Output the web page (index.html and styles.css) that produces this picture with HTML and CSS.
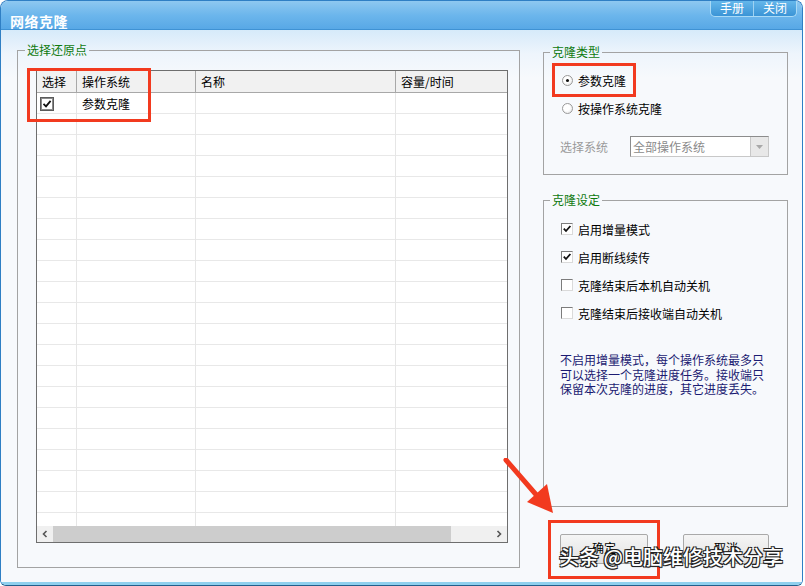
FILE: index.html
```html
<!DOCTYPE html>
<html lang="zh-CN">
  <head>
    <meta charset="UTF-8" />
    <title>网络克隆</title>
    <link rel="stylesheet" href="styles.css">
  </head>
  <body>
    <div class="window">
      <!-- Title bar -->
      <div class="titlebar">
        <span class="title">网络克隆</span>
        <div class="sys-buttons">
          <span class="sys-btn">手册</span><span class="sys-btn">关闭</span>
        </div>
      </div>

      <div class="main">
        <!-- Left: restore points -->
        <fieldset class="group group-points">
          <legend>选择还原点</legend>
          <div class="points-body">
            <div class="list">
              <div class="list-head">
                <div class="col col-check">选择</div>
                <div class="col col-os">操作系统</div>
                <div class="col col-name">名称</div>
                <div class="col col-size">容量/时间</div>
              </div>
              <div class="list-rows">
                <div class="row">
                  <div class="col col-check">
                    <span class="list-check">
                      <svg width="10" height="10" viewBox="0 0 10 10"><path d="M1.5 4.8 L4 7.3 L8.6 1.8" fill="none" stroke="#111" stroke-width="1.8"/></svg>
                    </span>
                  </div>
                  <div class="col col-os">参数克隆</div>
                  <div class="col col-name"></div>
                  <div class="col col-size"></div>
                </div>
              </div>
              <div class="hscroll">
                <span class="scroll-arrow">
                  <svg width="8" height="8" viewBox="0 0 8 8"><path d="M5.5 1 L2.5 4 L5.5 7" fill="none" stroke="#555" stroke-width="1.6"/></svg>
                </span>
                <span class="scroll-thumb"></span>
                <span class="scroll-track"></span>
                <span class="scroll-arrow">
                  <svg width="8" height="8" viewBox="0 0 8 8"><path d="M2.5 1 L5.5 4 L2.5 7" fill="none" stroke="#555" stroke-width="1.6"/></svg>
                </span>
              </div>
            </div>
          </div>
        </fieldset>

        <!-- Right column -->
        <div class="side">
          <fieldset class="group group-type">
            <legend>克隆类型</legend>
            <div class="type-body">
              <div class="radio-row">
                <span class="radio checked"></span>参数克隆
              </div>
              <div class="radio-row">
                <span class="radio"></span>按操作系统克隆
              </div>
              <div class="select-row">
                <span class="select-label">选择系统</span>
                <div class="select">
                  <span class="select-text">全部操作系统</span>
                  <span class="select-btn">
                    <svg width="7" height="4" viewBox="0 0 7 4"><path d="M0 0 H7 L3.5 4 Z" fill="#a8a8a8"/></svg>
                  </span>
                </div>
              </div>
            </div>
          </fieldset>

          <fieldset class="group group-settings">
            <legend>克隆设定</legend>
            <div class="settings-body">
              <div class="check-row">
                <span class="check">
                  <svg width="10" height="10" viewBox="0 0 10 10"><path d="M1.8 4.6 L4 7 L8.4 2" fill="none" stroke="#111" stroke-width="1.8"/></svg>
                </span>启用增量模式
              </div>
              <div class="check-row">
                <span class="check">
                  <svg width="10" height="10" viewBox="0 0 10 10"><path d="M1.8 4.6 L4 7 L8.4 2" fill="none" stroke="#111" stroke-width="1.8"/></svg>
                </span>启用断线续传
              </div>
              <div class="check-row">
                <span class="check"></span>克隆结束后本机自动关机
              </div>
              <div class="check-row">
                <span class="check"></span>克隆结束后接收端自动关机
              </div>
              <p class="note">
                不启用增量模式，每个操作系统最多只<br />可以选择一个克隆进度任务。接收端只<br />保留本次克隆的进度，其它进度丢失。
              </p>
            </div>
          </fieldset>

          <div class="actions">
            <button class="btn btn-ok">确定</button>
            <button class="btn btn-cancel">取消</button>
          </div>
        </div>
      </div>

      <!-- Annotations drawn over the screenshot -->
      <div class="mark mark-list"></div>
      <div class="mark mark-radio"></div>
      <div class="mark mark-ok"></div>
      <svg class="arrow" width="60" height="64" viewBox="0 0 60 64">
        <line x1="3" y1="2" x2="36" y2="40" stroke="#f23a1f" stroke-width="5" stroke-linecap="round"/>
        <polygon points="50,55 24,44 44,26" fill="#f23a1f"/>
      </svg>
      <div class="watermark">头条 @电脑维修技术分享</div>
    </div>
  </body>
</html>
```

FILE: styles.css
```css
body {
  margin: 0;
  background: #ffffff;
  font-family: "Noto Sans CJK SC", "Noto Sans", sans-serif;
  font-size: 12px;
  color: #000;
}

.window {
  position: relative;
  width: 803px;
  height: 586px;
  display: flex;
  flex-direction: column;
  border-radius: 8px 8px 6px 6px;
  overflow: hidden;
  box-sizing: border-box;
  border: 1px solid #2f7fc4;
  border-bottom: 1px solid #215f8c;
  background: #f7f9fc;
}

/* ---- title bar ---- */
.titlebar {
  position: relative;
  height: 28px;
  flex-shrink: 0;
  background: linear-gradient(#8ec8f0, #6cb6ec 50%, #58a8e6);
  border-bottom: 1px solid #3f92d4;
}

.title {
  display: block;
  padding: 12px 0 0 9px;
  line-height: 16px;
  font-size: 14px;
  font-weight: bold;
  color: #ffffff;
  letter-spacing: 0.5px;
}

.sys-buttons {
  position: absolute;
  top: -1px;
  right: 5px;
  display: flex;
  height: 16px;
  border: 1px solid #a9daf6;
  border-top: none;
  border-radius: 0 0 5px 5px;
  overflow: hidden;
  background: linear-gradient(#67b9ec, #3b94d6);
}

.sys-btn {
  width: 42px;
  line-height: 16px;
  text-align: center;
  color: #ffffff;
  font-size: 12px;
}

.sys-btn + .sys-btn {
  border-left: 1px solid #9fd2f2;
}

/* ---- main area ---- */
.main {
  flex: 1;
  display: flex;
  gap: 23px;
  padding: 13px 0 0 16px;
  background: linear-gradient(#d6eafa 0, #eef5fc 24px, #f7f9fc 48px);
  border-bottom: 3px solid #8fd0ee;
}

.group {
  margin: 0;
  padding: 0;
  min-width: 0;
  border: 1px solid #a3a3a3;
  box-sizing: border-box;
}

.group legend {
  padding: 0 2px;
  line-height: 14px;
  color: #0f7a0f;
  font-size: 12px;
}

.group-points {
  width: 503px;
  align-self: flex-start;
}

.group-points legend {
  margin-left: 7px;
}

.points-body {
  padding: 13px 11px 24px 18px;
}

/* ---- list view ---- */
.list {
  height: 473px;
  box-sizing: border-box;
  border: 1px solid #6e6e6e;
  background: #ffffff;
  display: flex;
  flex-direction: column;
}

.list-head {
  display: flex;
  height: 21px;
  flex-shrink: 0;
  background: #f1f1f1;
  border-bottom: 1px solid #a8a8a8;
}

.list-head .col {
  line-height: 21px;
  border-right: 1px solid #a8a8a8;
}

.col {
  box-sizing: border-box;
  padding-left: 5px;
}

.col-check { width: 40px; }
.col-os { width: 119px; }
.col-name { width: 200px; }
.col-size { flex: 1; border-right: none !important; }

.list-rows {
  flex: 1;
  overflow: hidden;
  background-image:
    linear-gradient(to right, transparent 39px, #e6e6e6 39px, #e6e6e6 40px, transparent 40px,
      transparent 158px, #e6e6e6 158px, #e6e6e6 159px, transparent 159px,
      transparent 358px, #e6e6e6 358px, #e6e6e6 359px, transparent 359px),
    repeating-linear-gradient(to bottom, transparent 0, transparent 20px, #e8e8e8 20px, #e8e8e8 21px);
}

.row {
  display: flex;
  height: 21px;
  align-items: center;
}

.row .col-check {
  padding-left: 3px;
}

.list-check {
  display: flex;
  align-items: center;
  justify-content: center;
  width: 12px;
  height: 12px;
  border: 1px solid #5a5a5a;
  box-shadow: inset 0 0 0 1px #8a8a8a;
  background: #ffffff;
}

.hscroll {
  display: flex;
  height: 16px;
  flex-shrink: 0;
  background: #f0f0f0;
}

.scroll-arrow {
  width: 16px;
  display: flex;
  align-items: center;
  justify-content: center;
}

.scroll-thumb {
  width: 398px;
  background: #cdcdcd;
}

.scroll-track {
  flex: 1;
}

/* ---- right column ---- */
.side {
  width: 245px;
  margin-top: 2px;
  display: flex;
  flex-direction: column;
}

.group-type legend,
.group-settings legend {
  margin-left: 6px;
}

.type-body {
  padding: 11px 0 17px 16px;
}

.radio-row {
  display: flex;
  align-items: center;
  gap: 5px;
  height: 20px;
  padding-left: 2px;
}

.radio-row + .radio-row {
  margin-top: 8px;
}

.radio {
  width: 11px;
  height: 11px;
  box-sizing: border-box;
  border-radius: 50%;
  border: 1px solid #9a9a9a;
  background: radial-gradient(circle at 40% 40%, #ffffff 40%, #dedede);
  position: relative;
}

.radio.checked::after {
  content: "";
  position: absolute;
  left: 3px;
  top: 3px;
  width: 3px;
  height: 3px;
  border-radius: 50%;
  background: #111;
}

.select-row {
  display: flex;
  align-items: center;
  margin-top: 18px;
  height: 21px;
}

.select-label {
  width: 70px;
  color: #9a9a9a;
}

.select {
  display: flex;
  width: 139px;
  height: 21px;
  box-sizing: border-box;
  border: 1px solid #8c8c8c;
  border-right-color: #c8c8c8;
  border-bottom-color: #c8c8c8;
  background: #ffffff;
}

.select-text {
  flex: 1;
  padding-left: 2px;
  line-height: 19px;
  color: #8a8a8a;
}

.select-btn {
  width: 17px;
  display: flex;
  align-items: center;
  justify-content: center;
  background: #e8e8e8;
  border-left: 1px solid #c8c8c8;
}

.group-settings {
  margin-top: 18px;
}

.settings-body {
  height: 299px;
  box-sizing: border-box;
  padding: 12px 0 0 16px;
}

.check-row {
  display: flex;
  align-items: center;
  gap: 5px;
  height: 20px;
  padding-left: 1px;
}

.check-row + .check-row {
  margin-top: 8px;
}

.check {
  display: flex;
  align-items: center;
  justify-content: center;
  width: 12px;
  height: 12px;
  box-sizing: border-box;
  border: 1px solid;
  border-color: #7c7c7c #dadada #dadada #7c7c7c;
  background: #ffffff;
}

.note {
  margin: 30px 0 0;
  line-height: 14.5px;
  color: #1b1b72;
}

.actions {
  display: flex;
  margin-top: 27px;
}

.btn {
  height: 30px;
  padding: 0 0 4px;
  font-family: inherit;
  font-size: 12px;
  color: #000;
  border: 1px solid #a9a9a9;
  border-radius: 2px;
  background: linear-gradient(#f5f5f5, #e2e2e2);
}

.btn-ok {
  width: 88px;
  margin-left: 17px;
}

.btn-cancel {
  width: 86px;
  margin-left: 35px;
}

/* ---- annotations ---- */
.mark {
  position: absolute;
  border: 3px solid #f23a1f;
  box-sizing: border-box;
}

.mark-list {
  left: 26px;
  top: 67px;
  width: 124px;
  height: 54px;
}

.mark-radio {
  left: 551px;
  top: 62px;
  width: 84px;
  height: 34px;
}

.mark-ok {
  left: 547px;
  top: 519px;
  width: 112px;
  height: 59px;
}

.arrow {
  position: absolute;
  left: 502px;
  top: 457px;
}

.watermark {
  position: absolute;
  left: 558px;
  top: 543px;
  font-size: 20px;
  line-height: 26px;
  font-weight: 500;
  color: #ffffff;
  text-shadow: 1px 1px 0 #222, -1px -1px 0 #222, 1px -1px 0 #222, -1px 1px 0 #222, 0 1px 1px #222;
  white-space: nowrap;
}
```
